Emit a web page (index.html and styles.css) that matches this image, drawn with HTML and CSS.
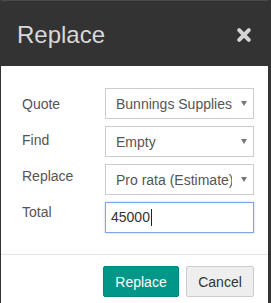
FILE: index.html
```html
<!DOCTYPE html>
<html lang="en">
<head>
    <meta charset="UTF-8">
    <meta name="viewport" content="width=device-width, initial-scale=1.0">
    <title>Replace</title>
    <link rel="stylesheet" href="styles.css">
</head>
<body>

    <div class="modal">
        <div class="modal-header">
            <h2>Replace</h2>
            <span class="close-btn" title="Close">
                <svg width="16" height="16" viewBox="0 0 16 16">
                    <path d="M3.2 3.2 L12.8 12.8 M12.8 3.2 L3.2 12.8" stroke="#d4d4d4" stroke-width="4" stroke-linecap="round" fill="none"/>
                </svg>
            </span>
        </div>

        <div class="modal-body">
            <div class="label-col">
                <label>Quote</label>
                <label>Find</label>
                <label>Replace</label>
                <label>Total</label>
            </div>
            <div class="field-col">
                <div class="select">
                    <span class="select-text">Bunnings Supplies</span>
                    <span class="select-arrow"></span>
                </div>
                <div class="select">
                    <span class="select-text">Empty</span>
                    <span class="select-arrow"></span>
                </div>
                <div class="select">
                    <span class="select-text">Pro rata (Estimate)</span>
                    <span class="select-arrow"></span>
                </div>
                <div class="text-input">45000<span class="caret"></span></div>
            </div>
        </div>

        <div class="modal-footer">
            <button class="btn btn-primary">Replace</button>
            <button class="btn btn-default">Cancel</button>
        </div>
    </div>

</body>
</html>
```

FILE: styles.css
```css
body {
    font-family: 'Liberation Sans', Arial, sans-serif;
    background-color: #333;
    margin: 0;
    padding: 0;
}

.modal {
    margin: 0 3px 1px 1px;
    background: #ffffff;
    border-top: 1px solid #4a4a4a;
}

.modal-header {
    background: #333;
    height: 65px;
    display: flex;
    align-items: center;
    justify-content: space-between;
    padding: 0 16px 0 16px;
    margin-left: -1px;
}

.modal-header h2 {
    margin: 0;
    font-size: 24px;
    font-weight: normal;
    color: #d8d8d8;
    padding-left: 1px;
    padding-top: 2px;
}

.close-btn {
    display: flex;
    margin-top: 3px;
}

.modal-body {
    display: flex;
    padding: 22px 14px 16px 21px;
}

.label-col {
    width: 83px;
    flex-shrink: 0;
    display: flex;
    flex-direction: column;
    padding-top: 6px;
}

.label-col label {
    font-size: 14px;
    line-height: 20px;
    height: 36px;
    color: #555;
}

.field-col {
    flex: 1;
    min-width: 0;
    display: flex;
    flex-direction: column;
    gap: 7px;
}

.select {
    display: flex;
    align-items: center;
    height: 31px;
    box-sizing: border-box;
    border: 1px solid #ccc;
    padding-left: 10px;
    font-size: 14px;
    color: #555;
}

.select-text {
    flex: 1;
    min-width: 0;
    overflow: hidden;
    white-space: nowrap;
    line-height: 28px;
    padding-top: 1px;
}

.select-arrow {
    width: 21px;
    flex-shrink: 0;
    display: flex;
    justify-content: center;
}

.select-arrow::after {
    content: "";
    border-left: 3px solid transparent;
    border-right: 3px solid transparent;
    border-top: 5px solid #777;
    margin-left: 3px;
}

.text-input {
    height: 31px;
    box-sizing: border-box;
    border: 1px solid #7da7e6;
    box-shadow: 0 0 2px rgba(102, 150, 230, 0.5);
    padding-left: 5px;
    font-size: 14px;
    line-height: 29px;
    color: #333;
    display: flex;
    align-items: center;
}

.caret {
    display: inline-block;
    width: 1px;
    height: 17px;
    background: #222;
    margin-left: 1px;
}

.modal-footer {
    border-top: 1px solid #e5e5e5;
    display: flex;
    justify-content: flex-end;
    gap: 7px;
    padding: 11px 14px 10px 0;
}

.btn {
    font-family: inherit;
    font-size: 14px;
    height: 31px;
    border-radius: 2px;
    cursor: pointer;
}

.btn-primary {
    background: #009688;
    color: white;
    border: 1px solid #00897b;
    width: 76px;
}

.btn-default {
    background: #eee;
    color: #333;
    border: 1px solid #ccc;
    width: 68px;
}
```
